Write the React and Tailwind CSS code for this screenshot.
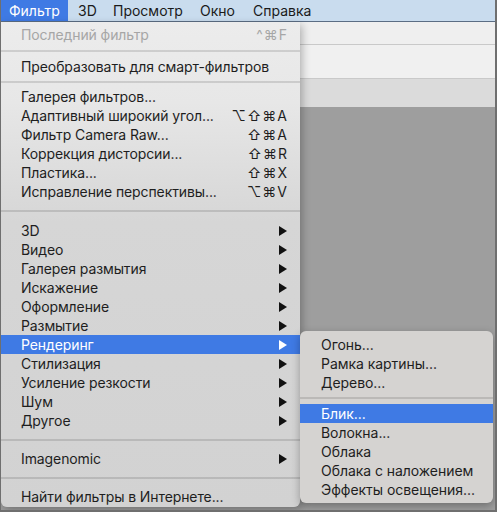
import React from "react";

const Arrow = ({ white }) => (
  <svg width="8" height="10" viewBox="0 0 8 10" className="shrink-0">
    <polygon points="0,0 8,5 0,10" fill={white ? "#ffffff" : "#111111"} />
  </svg>
);

const Sep = ({ h }) => (
  <div className={`flex items-center ${h}`}>
    <div className="h-[2px] w-full bg-black/[0.12]" />
  </div>
);

const Item = ({ label, shortcut, arrow, disabled, active }) => (
  <div
    className={`flex h-[19px] items-center justify-between pl-[20px] pr-[12px] ${
      active ? "bg-[#3f7ae4] text-white" : disabled ? "text-[#a6a6a6]" : "text-[#1e1e1e]"
    }`}
  >
    <span className="whitespace-nowrap tracking-[-0.1px]">{label}</span>
    {shortcut && <span className="whitespace-nowrap tracking-[1px]">{shortcut}</span>}
    {arrow && <span className="pr-px"><Arrow white={active} /></span>}
  </div>
);

const SubItem = ({ label, active }) => (
  <div
    className={`flex h-[19px] items-center pl-[21px] ${
      active ? "bg-[#3f7ae4] text-white" : "text-[#1e1e1e]"
    }`}
  >
    <span className="whitespace-nowrap tracking-[-0.05px]">{label}</span>
  </div>
);

export default function App() {
  return (
    <div className="relative h-[512px] w-[497px] overflow-hidden border-b-2 border-l border-r-2 border-[#6f6f6f] bg-[#9e9e9e] font-['Inter','DejaVu_Sans',sans-serif] text-[14px] leading-none antialiased">
      {/* menu bar */}
      <div className="flex h-[22px] items-stretch border-b border-[#5b6d84] bg-[#c9dcee] text-[#1a1a1a]">
        <div className="flex w-[67px] items-center bg-[#3f7ae4] pl-[8px] text-white">Фильтр</div>
        <div className="flex w-[36px] items-center pl-[10px]">3D</div>
        <div className="flex w-[88px] items-center pl-[9px]">Просмотр</div>
        <div className="flex w-[52px] items-center pl-[8px]">Окно</div>
        <div className="flex flex-1 items-center pl-[9px]">Справка</div>
      </div>
      {/* window background strips */}
      <div className="flex flex-col">
        <div className="h-[23px] border-b border-[#c9c9c9] bg-[#efefef]" />
        <div className="h-[34px] border-b border-[#c9c9c9] bg-[#f0f0f0]" />
        <div className="h-[28px] bg-[#dbdbdb]" />
      </div>

      {/* main menu */}
      <div className="absolute left-0 top-[22px] w-[299px] rounded-b-[6px] bg-[linear-gradient(to_bottom,#ececec_0px,#e7e7e7_80px,#d6d6d6_200px,#d2d2d2_100%)] pb-[1px] pt-[3px] shadow-[2px_3px_8px_rgba(0,0,0,0.28)]">
        <Item label="Последний фильтр" shortcut="^⌘F" disabled />
        <Sep h="h-[13px]" />
        <Item label="Преобразовать для смарт-фильтров" />
        <Sep h="h-[11px]" />
        <Item label="Галерея фильтров..." />
        <Item label="Адаптивный широкий угол..." shortcut="⌥⇧⌘A" />
        <Item label="Фильтр Camera Raw..." shortcut="⇧⌘A" />
        <Item label="Коррекция дисторсии..." shortcut="⇧⌘R" />
        <Item label="Пластика..." shortcut="⇧⌘X" />
        <Item label="Исправление перспективы..." shortcut="⌥⌘V" />
        <Sep h="h-[20px]" />
        <Item label="3D" arrow />
        <Item label="Видео" arrow />
        <Item label="Галерея размытия" arrow />
        <Item label="Искажение" arrow />
        <Item label="Оформление" arrow />
        <Item label="Размытие" arrow />
        <Item label="Рендеринг" arrow active />
        <Item label="Стилизация" arrow />
        <Item label="Усиление резкости" arrow />
        <Item label="Шум" arrow />
        <Item label="Другое" arrow />
        <Sep h="h-[19px]" />
        <Item label="Imagenomic" arrow />
        <Sep h="h-[19px]" />
        <Item label="Найти фильтры в Интернете..." />
      </div>

      {/* submenu */}
      <div className="absolute left-[299px] top-[331px] w-[193px] overflow-hidden rounded-[6px] bg-[#d5d3d1] py-[4px] shadow-[0_3px_8px_rgba(0,0,0,0.3)]">
        <SubItem label="Огонь..." />
        <SubItem label="Рамка картины..." />
        <SubItem label="Дерево..." />
        <Sep h="h-[12px]" />
        <SubItem label="Блик..." active />
        <SubItem label="Волокна..." />
        <SubItem label="Облака" />
        <SubItem label="Облака с наложением" />
        <SubItem label="Эффекты освещения..." />
      </div>
    </div>
  );
}
